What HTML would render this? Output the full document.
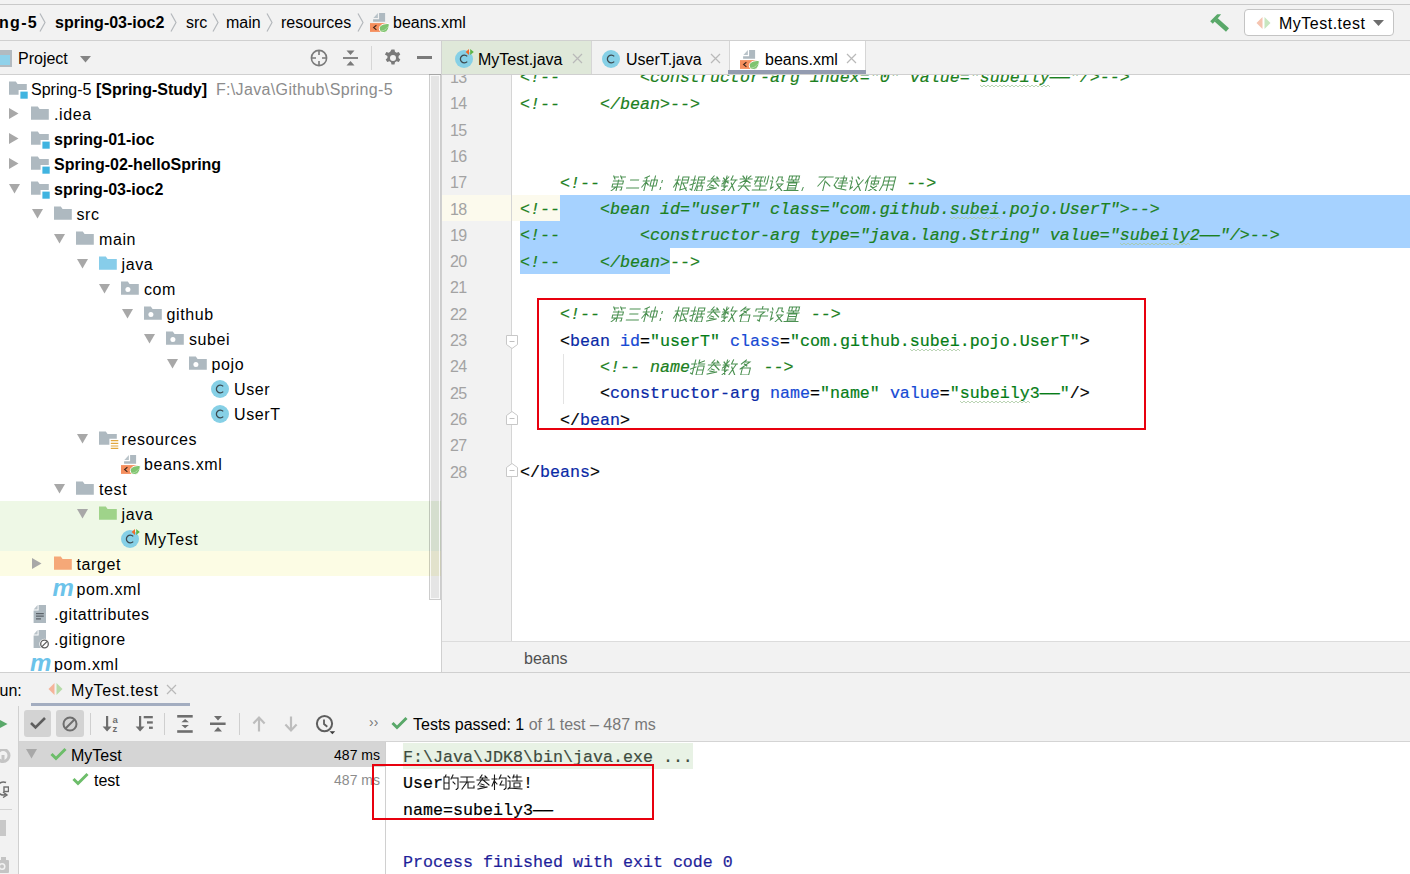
<!DOCTYPE html><html><head><meta charset="utf-8"><style>
*{margin:0;padding:0;box-sizing:border-box}
html,body{width:1410px;height:874px;overflow:hidden;background:#f2f2f2}
body{position:relative;font-family:"Liberation Sans",sans-serif;font-size:16px;color:#000}
.a{position:absolute}
.t{position:absolute;white-space:pre;line-height:25px;height:25px}
.b{font-weight:bold}
.mono{font-family:"Liberation Mono",monospace;font-size:16.67px;white-space:pre;-webkit-text-stroke:0.2px currentColor}
.cm{color:#1b8020;font-style:italic}
.tg{color:#0a2aa6}
.at{color:#174ad4}
.vl{color:#067d17}
.bk{color:#000}
.cjk{display:inline-block;overflow:hidden;vertical-align:top;letter-spacing:5.9px;color:#6a9a6c}
</style></head><body>
<div class="a" style="left:0px;top:4px;width:1410px;height:1px;background:#c9c9c9;"></div>
<div class="a" style="left:0px;top:40px;width:1410px;height:1px;background:#d0d0d0;"></div>
<div class="t b" style="left:-100px;top:10px;width:138px;text-align:right;letter-spacing:1.3px">ng-5</div>
<svg class="a" style="left:39px;top:13px" width="8" height="20" viewBox="0 0 8 20"><path d="M1 0.5 L6 9.5 L1 18.5" fill="none" stroke="#b4b8bc" stroke-width="1.2"/></svg>
<div class="t b" style="left:55px;top:10px;">spring-03-ioc2</div>
<svg class="a" style="left:170px;top:13px" width="8" height="20" viewBox="0 0 8 20"><path d="M1 0.5 L6 9.5 L1 18.5" fill="none" stroke="#b4b8bc" stroke-width="1.2"/></svg>
<div class="t " style="left:186px;top:10px;">src</div>
<svg class="a" style="left:212px;top:13px" width="8" height="20" viewBox="0 0 8 20"><path d="M1 0.5 L6 9.5 L1 18.5" fill="none" stroke="#b4b8bc" stroke-width="1.2"/></svg>
<div class="t " style="left:226px;top:10px;">main</div>
<svg class="a" style="left:266px;top:13px" width="8" height="20" viewBox="0 0 8 20"><path d="M1 0.5 L6 9.5 L1 18.5" fill="none" stroke="#b4b8bc" stroke-width="1.2"/></svg>
<div class="t " style="left:281px;top:10px;">resources</div>
<svg class="a" style="left:357px;top:13px" width="8" height="20" viewBox="0 0 8 20"><path d="M1 0.5 L6 9.5 L1 18.5" fill="none" stroke="#b4b8bc" stroke-width="1.2"/></svg>
<svg class="a" style="left:370px;top:13px" width="20" height="20" viewBox="0 0 20 20"><path d="M3.4 5 L7.9 0 V5 Z" fill="#b9c3c9"/><path d="M9.1 0 H15.1 V8.8 H3.1 V6.2 H9.1 Z" fill="#aeb9c0"/><rect x="0" y="10.1" width="16.9" height="8.8" fill="#f58e5d"/><path d="M6.4 12.3 L3.6 14.5 L6.4 16.8" fill="none" stroke="#40261a" stroke-width="1.1"/><path d="M9.3 15.6 C9.3 12.3 12.8 10.6 19.2 10.4 C19.4 16.2 17 19.6 13 19.5 C10.9 19.4 9.3 17.8 9.3 15.6 Z" fill="#7fc46f" stroke="#fff" stroke-width="1"/><path d="M11.5 18 Q15.5 17.5 18 13.5" fill="none" stroke="#e8f5e3" stroke-width="0.7" stroke-dasharray="1.2 0.8"/></svg>
<div class="t " style="left:393px;top:10px;">beans.xml</div>
<svg class="a" style="left:1208px;top:12px" width="24" height="22" viewBox="0 0 24 22"><path d="M2.2 9.3 L9.2 2.3 H13.1 L11.1 4.8 L4.8 11.8 Z" fill="#59a869"/><path d="M8 7.7 L19.5 18" stroke="#59a869" stroke-width="4.5"/></svg>
<div class="a" style="left:1244px;top:9px;width:150px;height:27px;background:#fff;border:1px solid #c4c4c4;border-radius:4px"></div>
<svg class="a" style="left:1256px;top:16px" width="16" height="14" viewBox="0 0 16 14"><path d="M6.5 1 L0.5 7 L6.5 13 Z" fill="#f5c4b0"/><path d="M8.5 1 L14.5 7 L8.5 13 Z" fill="#c8e6c0"/></svg>
<div class="t " style="left:1279px;top:11px;letter-spacing:0.5px">MyTest.test</div>
<svg class="a" style="left:1373px;top:19px" width="12" height="8" viewBox="0 0 12 8"><path d="M0 1 L11 1 L5.5 7 Z" fill="#6e6e6e"/></svg>
<div class="a" style="left:0px;top:74px;width:441px;height:1px;background:#d0d0d0;"></div>
<div class="a" style="left:-2px;top:50px;width:14px;height:17px;background:#8fd1ea;border:2.5px solid #b2bac0;border-top-width:5px"></div>
<div class="t " style="left:18px;top:46px;">Project</div>
<svg class="a" style="left:80px;top:56px" width="12" height="8" viewBox="0 0 12 8"><path d="M0 0 L11 0 L5.5 6.5 Z" fill="#858585"/></svg>
<svg class="a" style="left:309px;top:49px" width="20" height="18" viewBox="0 0 20 18"><circle cx="10" cy="9" r="7.6" fill="none" stroke="#7a7a7a" stroke-width="1.6"/><path d="M10 1 V6 M10 12 V17 M2 9 H7 M13 9 H18" stroke="#7a7a7a" stroke-width="1.6"/></svg>
<svg class="a" style="left:343px;top:49px" width="16" height="18" viewBox="0 0 16 18"><path d="M0 9 H15" stroke="#7a7a7a" stroke-width="1.8"/><path d="M3.5 1.5 H11.5 L7.5 6 Z M3.5 16.5 H11.5 L7.5 12 Z" fill="#7a7a7a"/></svg>
<div class="a" style="left:371px;top:46px;width:1px;height:24px;background:#d6d6d6;"></div>
<svg class="a" style="left:384px;top:49px" width="18" height="18" viewBox="0 0 18 18"><path fill="#7a7a7a" fill-rule="evenodd" d="M7.5 0.5h3l.5 2.3 1.6.9 2.2-.8 1.5 2.6-1.7 1.6v1.8l1.7 1.6-1.5 2.6-2.2-.8-1.6.9-.5 2.3h-3l-.5-2.3-1.6-.9-2.2.8-1.5-2.6 1.7-1.6V7.1L.9 5.5 2.4 2.9l2.2.8 1.6-.9zM9 6a3 3 0 1 0 0 6 3 3 0 0 0 0-6z"/></svg>
<div class="a" style="left:417px;top:56px;width:15px;height:3px;background:#7a7a7a;"></div>
<div class="a" style="left:0px;top:75px;width:441px;height:597px;background:#fff;"></div>
<div class="a" style="left:0px;top:500.5px;width:441px;height:50px;background:#eef8e6;"></div>
<div class="a" style="left:0px;top:550.5px;width:441px;height:25px;background:#fcfce4;"></div>
<div class="a" style="left:441px;top:41px;width:1px;height:631px;background:#d0d0d0;"></div>
<div class="a" style="left:0;top:75px;width:429px;height:597px;overflow:hidden">
<svg class="a" style="left:9px;top:6px" width="21" height="20" viewBox="0 0 21 20"><path d="M0 0.6 H6.8 L8.6 3.1 H17.8 V8.9 H9.6 V13.7 H0 Z" fill="#aeb9c0"/><rect x="11.4" y="10.6" width="7.3" height="7.1" fill="#40b4e0"/></svg>
<div class="t " style="left:31px;top:2px;">Spring-5 <b>[Spring-Study]</b>  <span style="color:#8c8c8c;letter-spacing:0.35px">F:\Java\Github\Spring-5</span></div>
<svg class="a" style="left:9.0px;top:33px" width="10" height="11" viewBox="0 0 10 11"><path d="M0 0 L9.5 5.5 L0 11 Z" fill="#a8a8a8"/></svg>
<svg class="a" style="left:31.0px;top:31px" width="21" height="20" viewBox="0 0 21 20"><path d="M0 0.6 H6.8 L8.6 3.1 H17.8 V13.7 H0 Z" fill="#aeb9c0"/></svg>
<div class="t " style="left:54.0px;top:27px;letter-spacing:0.6px">.idea</div>
<svg class="a" style="left:9.0px;top:58px" width="10" height="11" viewBox="0 0 10 11"><path d="M0 0 L9.5 5.5 L0 11 Z" fill="#a8a8a8"/></svg>
<svg class="a" style="left:31.0px;top:56px" width="21" height="20" viewBox="0 0 21 20"><path d="M0 0.6 H6.8 L8.6 3.1 H17.8 V8.9 H9.6 V13.7 H0 Z" fill="#aeb9c0"/><rect x="11.4" y="10.6" width="7.3" height="7.1" fill="#40b4e0"/></svg>
<div class="t b" style="left:54.0px;top:52px;">spring-01-ioc</div>
<svg class="a" style="left:9.0px;top:83px" width="10" height="11" viewBox="0 0 10 11"><path d="M0 0 L9.5 5.5 L0 11 Z" fill="#a8a8a8"/></svg>
<svg class="a" style="left:31.0px;top:81px" width="21" height="20" viewBox="0 0 21 20"><path d="M0 0.6 H6.8 L8.6 3.1 H17.8 V8.9 H9.6 V13.7 H0 Z" fill="#aeb9c0"/><rect x="11.4" y="10.6" width="7.3" height="7.1" fill="#40b4e0"/></svg>
<div class="t b" style="left:54.0px;top:77px;">Spring-02-helloSpring</div>
<svg class="a" style="left:9.0px;top:109px" width="11" height="10" viewBox="0 0 11 10"><path d="M0 0 L11 0 L5.5 9.5 Z" fill="#a8a8a8"/></svg>
<svg class="a" style="left:31.0px;top:106px" width="21" height="20" viewBox="0 0 21 20"><path d="M0 0.6 H6.8 L8.6 3.1 H17.8 V8.9 H9.6 V13.7 H0 Z" fill="#aeb9c0"/><rect x="11.4" y="10.6" width="7.3" height="7.1" fill="#40b4e0"/></svg>
<div class="t b" style="left:54.0px;top:102px;">spring-03-ioc2</div>
<svg class="a" style="left:31.5px;top:134px" width="11" height="10" viewBox="0 0 11 10"><path d="M0 0 L11 0 L5.5 9.5 Z" fill="#a8a8a8"/></svg>
<svg class="a" style="left:53.5px;top:131px" width="21" height="20" viewBox="0 0 21 20"><path d="M0 0.6 H6.8 L8.6 3.1 H17.8 V13.7 H0 Z" fill="#aeb9c0"/></svg>
<div class="t " style="left:76.5px;top:127px;letter-spacing:0.6px">src</div>
<svg class="a" style="left:54.0px;top:159px" width="11" height="10" viewBox="0 0 11 10"><path d="M0 0 L11 0 L5.5 9.5 Z" fill="#a8a8a8"/></svg>
<svg class="a" style="left:76.0px;top:156px" width="21" height="20" viewBox="0 0 21 20"><path d="M0 0.6 H6.8 L8.6 3.1 H17.8 V13.7 H0 Z" fill="#aeb9c0"/></svg>
<div class="t " style="left:99.0px;top:152px;letter-spacing:0.6px">main</div>
<svg class="a" style="left:76.5px;top:184px" width="11" height="10" viewBox="0 0 11 10"><path d="M0 0 L11 0 L5.5 9.5 Z" fill="#a8a8a8"/></svg>
<svg class="a" style="left:98.5px;top:181px" width="21" height="20" viewBox="0 0 21 20"><path d="M0 0.6 H6.8 L8.6 3.1 H17.8 V13.7 H0 Z" fill="#87cdea"/></svg>
<div class="t " style="left:121.5px;top:177px;letter-spacing:0.6px">java</div>
<svg class="a" style="left:99.0px;top:209px" width="11" height="10" viewBox="0 0 11 10"><path d="M0 0 L11 0 L5.5 9.5 Z" fill="#a8a8a8"/></svg>
<svg class="a" style="left:121.0px;top:206px" width="21" height="20" viewBox="0 0 21 20"><path d="M0 0.6 H6.8 L8.6 3.1 H17.8 V13.7 H0 Z" fill="#aeb9c0"/><circle cx="6.9" cy="8.6" r="2.5" fill="#fff"/></svg>
<div class="t " style="left:144.0px;top:202px;letter-spacing:0.6px">com</div>
<svg class="a" style="left:121.5px;top:234px" width="11" height="10" viewBox="0 0 11 10"><path d="M0 0 L11 0 L5.5 9.5 Z" fill="#a8a8a8"/></svg>
<svg class="a" style="left:143.5px;top:231px" width="21" height="20" viewBox="0 0 21 20"><path d="M0 0.6 H6.8 L8.6 3.1 H17.8 V13.7 H0 Z" fill="#aeb9c0"/><circle cx="6.9" cy="8.6" r="2.5" fill="#fff"/></svg>
<div class="t " style="left:166.5px;top:227px;letter-spacing:0.6px">github</div>
<svg class="a" style="left:144.0px;top:259px" width="11" height="10" viewBox="0 0 11 10"><path d="M0 0 L11 0 L5.5 9.5 Z" fill="#a8a8a8"/></svg>
<svg class="a" style="left:166.0px;top:256px" width="21" height="20" viewBox="0 0 21 20"><path d="M0 0.6 H6.8 L8.6 3.1 H17.8 V13.7 H0 Z" fill="#aeb9c0"/><circle cx="6.9" cy="8.6" r="2.5" fill="#fff"/></svg>
<div class="t " style="left:189.0px;top:252px;letter-spacing:0.6px">subei</div>
<svg class="a" style="left:166.5px;top:284px" width="11" height="10" viewBox="0 0 11 10"><path d="M0 0 L11 0 L5.5 9.5 Z" fill="#a8a8a8"/></svg>
<svg class="a" style="left:188.5px;top:281px" width="21" height="20" viewBox="0 0 21 20"><path d="M0 0.6 H6.8 L8.6 3.1 H17.8 V13.7 H0 Z" fill="#aeb9c0"/><circle cx="6.9" cy="8.6" r="2.5" fill="#fff"/></svg>
<div class="t " style="left:211.5px;top:277px;letter-spacing:0.6px">pojo</div>
<svg class="a" style="left:210.0px;top:303px" width="21" height="21" viewBox="0 0 21 21"><circle cx="10" cy="11" r="9" fill="#86d0e6"/><path d="M13.2 8.4 A3.9 3.9 0 1 0 13.2 13.6" fill="none" stroke="#3d4a50" stroke-width="1.3"/></svg>
<div class="t " style="left:234.0px;top:302px;letter-spacing:0.6px">User</div>
<svg class="a" style="left:210.0px;top:328px" width="21" height="21" viewBox="0 0 21 21"><circle cx="10" cy="11" r="9" fill="#86d0e6"/><path d="M13.2 8.4 A3.9 3.9 0 1 0 13.2 13.6" fill="none" stroke="#3d4a50" stroke-width="1.3"/></svg>
<div class="t " style="left:234.0px;top:327px;letter-spacing:0.6px">UserT</div>
<svg class="a" style="left:76.5px;top:359px" width="11" height="10" viewBox="0 0 11 10"><path d="M0 0 L11 0 L5.5 9.5 Z" fill="#a8a8a8"/></svg>
<svg class="a" style="left:98.5px;top:356px" width="21" height="20" viewBox="0 0 21 20"><path d="M0 0.6 H6.8 L8.6 3.1 H17.8 V7.7 H10.4 V13.7 H0 Z" fill="#aeb9c0"/><path d="M11.8 9.7 H19.3 M11.8 12.4 H19.3 M11.8 15 H19.3 M11.8 17.4 H19.3" stroke="#e2a73c" stroke-width="1.2"/></svg>
<div class="t " style="left:121.5px;top:352px;letter-spacing:0.6px">resources</div>
<svg class="a" style="left:121.0px;top:380px" width="20" height="20" viewBox="0 0 20 20"><path d="M3.4 5 L7.9 0 V5 Z" fill="#b9c3c9"/><path d="M9.1 0 H15.1 V8.8 H3.1 V6.2 H9.1 Z" fill="#aeb9c0"/><rect x="0" y="10.1" width="16.9" height="8.8" fill="#f58e5d"/><path d="M6.4 12.3 L3.6 14.5 L6.4 16.8" fill="none" stroke="#40261a" stroke-width="1.1"/><path d="M9.3 15.6 C9.3 12.3 12.8 10.6 19.2 10.4 C19.4 16.2 17 19.6 13 19.5 C10.9 19.4 9.3 17.8 9.3 15.6 Z" fill="#7fc46f" stroke="#fff" stroke-width="1"/><path d="M11.5 18 Q15.5 17.5 18 13.5" fill="none" stroke="#e8f5e3" stroke-width="0.7" stroke-dasharray="1.2 0.8"/></svg>
<div class="t " style="left:144.0px;top:377px;letter-spacing:0.6px">beans.xml</div>
<svg class="a" style="left:54.0px;top:409px" width="11" height="10" viewBox="0 0 11 10"><path d="M0 0 L11 0 L5.5 9.5 Z" fill="#a8a8a8"/></svg>
<svg class="a" style="left:76.0px;top:406px" width="21" height="20" viewBox="0 0 21 20"><path d="M0 0.6 H6.8 L8.6 3.1 H17.8 V13.7 H0 Z" fill="#aeb9c0"/></svg>
<div class="t " style="left:99.0px;top:402px;letter-spacing:0.6px">test</div>
<svg class="a" style="left:76.5px;top:434px" width="11" height="10" viewBox="0 0 11 10"><path d="M0 0 L11 0 L5.5 9.5 Z" fill="#a8a8a8"/></svg>
<svg class="a" style="left:98.5px;top:431px" width="21" height="20" viewBox="0 0 21 20"><path d="M0 0.6 H6.8 L8.6 3.1 H17.8 V13.7 H0 Z" fill="#9fd38a"/></svg>
<div class="t " style="left:121.5px;top:427px;letter-spacing:0.6px">java</div>
<svg class="a" style="left:120.0px;top:453px" width="21" height="21" viewBox="0 0 21 21"><circle cx="10" cy="11" r="9" fill="#86d0e6"/><path d="M13.2 8.4 A3.9 3.9 0 1 0 13.2 13.6" fill="none" stroke="#3d4a50" stroke-width="1.3"/><path d="M15 1 L11.6 4 L15 7 Z" fill="#ee6a2a"/><path d="M16.2 1 L19.8 4 L16.2 7 Z" fill="#5db546"/></svg>
<div class="t " style="left:144.0px;top:452px;letter-spacing:0.6px">MyTest</div>
<svg class="a" style="left:31.5px;top:483px" width="10" height="11" viewBox="0 0 10 11"><path d="M0 0 L9.5 5.5 L0 11 Z" fill="#a8a8a8"/></svg>
<svg class="a" style="left:53.5px;top:481px" width="21" height="20" viewBox="0 0 21 20"><path d="M0 0.6 H6.8 L8.6 3.1 H17.8 V13.7 H0 Z" fill="#f5a878"/></svg>
<div class="t " style="left:76.5px;top:477px;letter-spacing:0.6px">target</div>
<div class="a" style="left:52.5px;top:503px;font-family:'Liberation Sans';font-weight:bold;font-style:italic;font-size:24px;line-height:20px;color:#6cc3ea;letter-spacing:-1px">m</div>
<div class="t " style="left:76.5px;top:502px;letter-spacing:0.6px">pom.xml</div>
<svg class="a" style="left:33.0px;top:530px" width="17" height="20" viewBox="0 0 17 20"><path d="M5.6 0 H13 V18 H0.6 V5.5 H5.6 Z" fill="#aeb9c0"/><path d="M0.6 4.5 L4.6 0 V4.5 Z" fill="#b9c3c9"/><path d="M3 8.6 H10.8 M3 11.1 H10.8 M3 13.9 H8" stroke="#5c6369" stroke-width="1.2"/></svg>
<div class="t " style="left:54.0px;top:527px;letter-spacing:0.6px">.gitattributes</div>
<svg class="a" style="left:33.0px;top:555px" width="17" height="20" viewBox="0 0 17 20"><path d="M5.6 0 H13 V18 H0.6 V5.5 H5.6 Z" fill="#aeb9c0"/><path d="M0.6 4.5 L4.6 0 V4.5 Z" fill="#b9c3c9"/><circle cx="11.5" cy="14" r="5.2" fill="#fff"/><circle cx="11.5" cy="14" r="3.8" fill="none" stroke="#5e5e5e" stroke-width="1.3"/><path d="M9 16.6 L14.1 11.4" stroke="#5e5e5e" stroke-width="1.3"/></svg>
<div class="t " style="left:54.0px;top:552px;letter-spacing:0.6px">.gitignore</div>
<div class="a" style="left:30.0px;top:578px;font-family:'Liberation Sans';font-weight:bold;font-style:italic;font-size:24px;line-height:20px;color:#6cc3ea;letter-spacing:-1px">m</div>
<div class="t " style="left:54.0px;top:577px;letter-spacing:0.6px">pom.xml</div>
</div>
<div class="a" style="left:429px;top:74px;width:12px;height:526px;background:rgba(0,0,0,0.1);border:1px solid rgba(0,0,0,0.1);box-shadow:inset 0 0 0 1px rgba(255,255,255,0.75)"></div>
<div class="a" style="left:442px;top:41px;width:149px;height:33px;background:#dfe8d9;"></div>
<div class="a" style="left:591px;top:41px;width:1px;height:33px;background:#d6d6d6;"></div>
<div class="a" style="left:730px;top:41px;width:135px;height:33px;background:#ffffff;"></div>
<div class="a" style="left:729px;top:41px;width:1px;height:33px;background:#d6d6d6;"></div>
<div class="a" style="left:865px;top:41px;width:1px;height:33px;background:#d6d6d6;"></div>
<div class="a" style="left:728px;top:70px;width:138px;height:4px;background:#939bb0;"></div>
<div class="a" style="left:442px;top:74px;width:968px;height:1px;background:#d0d0d0;"></div>
<svg class="a" style="left:454px;top:48px" width="21" height="21" viewBox="0 0 21 21"><circle cx="10" cy="11" r="9" fill="#86d0e6"/><path d="M13.2 8.4 A3.9 3.9 0 1 0 13.2 13.6" fill="none" stroke="#3d4a50" stroke-width="1.3"/><path d="M15 1 L11.6 4 L15 7 Z" fill="#ee6a2a"/><path d="M16.2 1 L19.8 4 L16.2 7 Z" fill="#5db546"/></svg>
<div class="t " style="left:478px;top:47px;">MyTest.java</div>
<svg class="a" style="left:572px;top:53px" width="11" height="11" viewBox="0 0 11 11"><path d="M1 1 L10 10 M10 1 L1 10" stroke="#b9b9b9" stroke-width="1.2"/></svg>
<svg class="a" style="left:601px;top:48px" width="21" height="21" viewBox="0 0 21 21"><circle cx="10" cy="11" r="9" fill="#86d0e6"/><path d="M13.2 8.4 A3.9 3.9 0 1 0 13.2 13.6" fill="none" stroke="#3d4a50" stroke-width="1.3"/></svg>
<div class="t " style="left:626px;top:47px;">UserT.java</div>
<svg class="a" style="left:710px;top:53px" width="11" height="11" viewBox="0 0 11 11"><path d="M1 1 L10 10 M10 1 L1 10" stroke="#b9b9b9" stroke-width="1.2"/></svg>
<svg class="a" style="left:740px;top:50px" width="20" height="20" viewBox="0 0 20 20"><path d="M3.4 5 L7.9 0 V5 Z" fill="#b9c3c9"/><path d="M9.1 0 H15.1 V8.8 H3.1 V6.2 H9.1 Z" fill="#aeb9c0"/><rect x="0" y="10.1" width="16.9" height="8.8" fill="#f58e5d"/><path d="M6.4 12.3 L3.6 14.5 L6.4 16.8" fill="none" stroke="#40261a" stroke-width="1.1"/><path d="M9.3 15.6 C9.3 12.3 12.8 10.6 19.2 10.4 C19.4 16.2 17 19.6 13 19.5 C10.9 19.4 9.3 17.8 9.3 15.6 Z" fill="#7fc46f" stroke="#fff" stroke-width="1"/><path d="M11.5 18 Q15.5 17.5 18 13.5" fill="none" stroke="#e8f5e3" stroke-width="0.7" stroke-dasharray="1.2 0.8"/></svg>
<div class="t " style="left:765px;top:47px;">beans.xml</div>
<svg class="a" style="left:846px;top:53px" width="11" height="11" viewBox="0 0 11 11"><path d="M1 1 L10 10 M10 1 L1 10" stroke="#b9b9b9" stroke-width="1.2"/></svg>
<div class="a" style="left:442px;top:75px;width:968px;height:566px;background:#fff;overflow:hidden">
<div class="a" style="left:0;top:0;width:69px;height:566px;background:#f2f2f2"></div>
<div class="a" style="left:69px;top:0;width:1px;height:566px;background:#d5d5d5"></div>
<div class="a" style="left:0;top:120.0px;width:69px;height:26.333px;background:#fcfaed"></div>
<div class="a" style="left:70px;top:120.0px;width:48px;height:26.333px;background:#fcfaed"></div>
<div class="a" style="left:118px;top:120.0px;width:850px;height:26.333px;background:#a6d2ff"></div>
<div class="a" style="left:78px;top:146.333px;width:890px;height:26.833px;background:#a6d2ff"></div>
<div class="a" style="left:78px;top:172.666px;width:150px;height:26.333px;background:#a6d2ff"></div>
<div class="a" style="left:8px;top:-10.164999999999992px;line-height:26.333px;font-size:16px;letter-spacing:-0.6px;color:#a3a3a3">13</div>
<div class="a" style="left:8px;top:16.168000000000006px;line-height:26.333px;font-size:16px;letter-spacing:-0.6px;color:#a3a3a3">14</div>
<div class="a" style="left:8px;top:42.501000000000005px;line-height:26.333px;font-size:16px;letter-spacing:-0.6px;color:#a3a3a3">15</div>
<div class="a" style="left:8px;top:68.834px;line-height:26.333px;font-size:16px;letter-spacing:-0.6px;color:#a3a3a3">16</div>
<div class="a" style="left:8px;top:95.167px;line-height:26.333px;font-size:16px;letter-spacing:-0.6px;color:#a3a3a3">17</div>
<div class="a" style="left:8px;top:121.5px;line-height:26.333px;font-size:16px;letter-spacing:-0.6px;color:#a3a3a3">18</div>
<div class="a" style="left:8px;top:147.833px;line-height:26.333px;font-size:16px;letter-spacing:-0.6px;color:#a3a3a3">19</div>
<div class="a" style="left:8px;top:174.166px;line-height:26.333px;font-size:16px;letter-spacing:-0.6px;color:#a3a3a3">20</div>
<div class="a" style="left:8px;top:200.499px;line-height:26.333px;font-size:16px;letter-spacing:-0.6px;color:#a3a3a3">21</div>
<div class="a" style="left:8px;top:226.832px;line-height:26.333px;font-size:16px;letter-spacing:-0.6px;color:#a3a3a3">22</div>
<div class="a" style="left:8px;top:253.165px;line-height:26.333px;font-size:16px;letter-spacing:-0.6px;color:#a3a3a3">23</div>
<div class="a" style="left:8px;top:279.49800000000005px;line-height:26.333px;font-size:16px;letter-spacing:-0.6px;color:#a3a3a3">24</div>
<div class="a" style="left:8px;top:305.831px;line-height:26.333px;font-size:16px;letter-spacing:-0.6px;color:#a3a3a3">25</div>
<div class="a" style="left:8px;top:332.164px;line-height:26.333px;font-size:16px;letter-spacing:-0.6px;color:#a3a3a3">26</div>
<div class="a" style="left:8px;top:358.49699999999996px;line-height:26.333px;font-size:16px;letter-spacing:-0.6px;color:#a3a3a3">27</div>
<div class="a" style="left:8px;top:384.83000000000004px;line-height:26.333px;font-size:16px;letter-spacing:-0.6px;color:#a3a3a3">28</div>
<div class="a" style="left:121px;top:278.99800000000005px;width:1px;height:49.666px;background:#e3e3e3"></div>
<svg class="a" style="left:64px;top:260px" width="12" height="14" viewBox="0 0 12 14"><path d="M0.5 0.5 H11.5 V9.5 L6 13.5 L0.5 9.5 Z" fill="#fff" stroke="#c8c8c8" stroke-width="1"/><path d="M3.5 6.5 H8.5" stroke="#c0c0c0" stroke-width="1"/></svg>
<svg class="a" style="left:64px;top:336px" width="12" height="14" viewBox="0 0 12 14"><path d="M0.5 13.5 V4.5 L6 0.5 L11.5 4.5 V13.5 Z" fill="#fff" stroke="#c8c8c8" stroke-width="1"/><path d="M3.5 7.5 H8.5" stroke="#c0c0c0" stroke-width="1"/></svg>
<svg class="a" style="left:64px;top:388px" width="12" height="14" viewBox="0 0 12 14"><path d="M0.5 13.5 V4.5 L6 0.5 L11.5 4.5 V13.5 Z" fill="#fff" stroke="#c8c8c8" stroke-width="1"/><path d="M3.5 7.5 H8.5" stroke="#c0c0c0" stroke-width="1"/></svg>
<svg class="a" style="left:538px;top:9.335000000000008px" width="71" height="4" viewBox="0 -0.5 71 3"><polyline points="0.0,0 2.0,2 4.0,0 6.0,2 8.0,0 10.0,2 12.0,0 14.0,2 16.0,0 18.0,2 20.0,0 22.0,2 24.0,0 26.0,2 28.0,0 30.0,2 32.0,0 34.0,2 36.0,0 38.0,2 40.0,0 42.0,2 44.0,0 46.0,2 48.0,0 50.0,2 52.0,0 54.0,2 56.0,0 58.0,2 60.0,0 62.0,2 64.0,0 66.0,2 68.0,0 70.0,2" fill="none" stroke="#a9c9a2" stroke-width="0.8"/></svg>
<svg class="a" style="left:508px;top:141.0px" width="51" height="4" viewBox="0 -0.5 51 3"><polyline points="0.0,0 2.0,2 4.0,0 6.0,2 8.0,0 10.0,2 12.0,0 14.0,2 16.0,0 18.0,2 20.0,0 22.0,2 24.0,0 26.0,2 28.0,0 30.0,2 32.0,0 34.0,2 36.0,0 38.0,2 40.0,0 42.0,2 44.0,0 46.0,2 48.0,0 50.0,2" fill="none" stroke="#a9c9a2" stroke-width="0.8"/></svg>
<svg class="a" style="left:678px;top:167.333px" width="71" height="4" viewBox="0 -0.5 71 3"><polyline points="0.0,0 2.0,2 4.0,0 6.0,2 8.0,0 10.0,2 12.0,0 14.0,2 16.0,0 18.0,2 20.0,0 22.0,2 24.0,0 26.0,2 28.0,0 30.0,2 32.0,0 34.0,2 36.0,0 38.0,2 40.0,0 42.0,2 44.0,0 46.0,2 48.0,0 50.0,2 52.0,0 54.0,2 56.0,0 58.0,2 60.0,0 62.0,2 64.0,0 66.0,2 68.0,0 70.0,2" fill="none" stroke="#a9c9a2" stroke-width="0.8"/></svg>
<svg class="a" style="left:468px;top:272.66499999999996px" width="51" height="4" viewBox="0 -0.5 51 3"><polyline points="0.0,0 2.0,2 4.0,0 6.0,2 8.0,0 10.0,2 12.0,0 14.0,2 16.0,0 18.0,2 20.0,0 22.0,2 24.0,0 26.0,2 28.0,0 30.0,2 32.0,0 34.0,2 36.0,0 38.0,2 40.0,0 42.0,2 44.0,0 46.0,2 48.0,0 50.0,2" fill="none" stroke="#a9c9a2" stroke-width="0.8"/></svg>
<svg class="a" style="left:518px;top:325.331px" width="71" height="4" viewBox="0 -0.5 71 3"><polyline points="0.0,0 2.0,2 4.0,0 6.0,2 8.0,0 10.0,2 12.0,0 14.0,2 16.0,0 18.0,2 20.0,0 22.0,2 24.0,0 26.0,2 28.0,0 30.0,2 32.0,0 34.0,2 36.0,0 38.0,2 40.0,0 42.0,2 44.0,0 46.0,2 48.0,0 50.0,2 52.0,0 54.0,2 56.0,0 58.0,2 60.0,0 62.0,2 64.0,0 66.0,2 68.0,0 70.0,2" fill="none" stroke="#a9c9a2" stroke-width="0.8"/></svg>
<div class="a mono" style="left:78px;top:-9.664999999999992px;line-height:26.333px"><span class="cm">&lt;!--        &lt;constructor-arg index="0" value="subeily——"/&gt;--&gt;</span></div>
<div class="a mono" style="left:78px;top:16.668000000000006px;line-height:26.333px"><span class="cm">&lt;!--    &lt;/bean&gt;--&gt;</span></div>
<div class="a mono" style="left:78px;top:95.667px;line-height:26.333px"><span class="cm">    &lt;!-- </span><span class="cm"><svg style="display:inline-block;vertical-align:top;position:relative;top:4px;transform:skewX(-14deg);" width="286.2" height="16" viewBox="0 0 288 16" preserveAspectRatio="none"><g fill="none" stroke="#4c9152" stroke-width="1.1" stroke-linecap="square"><path transform="translate(0,0)" d="M2 1L4 4M3 2H7M9 1L11 4M10 2H14M3 6H13V9H3V12H13V15L12 15M8 5V16M7 12L3 16"/><path transform="translate(16,0)" d="M4 5H12M2 13H14"/><path transform="translate(32,0)" d="M6 1L2 3M1 6H7M4 3V16M4 7L1 12M4 7L7 10M9 5H15V11H9ZM12 1V16"/><path transform="translate(48,0)" d="M4 5.5V7.5M4 12.5V14.5"/><path transform="translate(64,0)" d="M1 5H6M3.5 1V16M3.5 6L1 12M3.5 7L6 10M8 2H14V8H8ZM8 5H14M8 2V15L14 13M10 9L15 16"/><path transform="translate(80,0)" d="M1 5H6M4 1V15L2 14M1 10L6 8M8 2H14V5H8M8 2V10L7 16M9 8H15M12 6V11M9 11H14V16H9Z"/><path transform="translate(96,0)" d="M7 1L5 4H12L10 2M2 6H14M8 4L3 11M8 6L14 11M6 10L9 11M5 12L10 13M3 15L12 13"/><path transform="translate(112,0)" d="M1 3L3 5M6 2L4 5M1 6H7M4 1V9M4 6L1 9M4 6L7 8M1 11H7M3 9L5 16M6 11L2 16M10 1L9 5H15M14 5L9 16M10 8L15 16"/><path transform="translate(128,0)" d="M4 1L6 3M12 1L10 3M2 4H14M8 1V8M8 5L3 8M8 5L13 8M2 11H14M8 8L3 16M8 11L14 16"/><path transform="translate(144,0)" d="M1 2H9M1 6H9M4 2L2 9M7 2V9M11 2V7M14 1V9L13 9M3 11H13M8 9V15M1 15H15"/><path transform="translate(160,0)" d="M2 2L3 4M1 6H3V14L5 12M8 2V5L7 7M8 2H12V5L14 6M8 9H14L8 16M9 10L15 16"/><path transform="translate(176,0)" d="M3 1H13V5H3ZM6 1V5M10 1V5M2 7H14M8 5V8M4 8H12V15H4ZM4 10.5H12M4 13H12M1 15.5H15"/><path transform="translate(192,0)" d="M3.5 12.5L3 16"/><path transform="translate(208,0)" d="M1 2H15M8 2L2 11M8 6V16M9 7L14 11"/><path transform="translate(224,0)" d="M2 3H5L2 10L5 13L15 15M7 3H13V6H7M6 8H15M7 11H14M10 1V14"/><path transform="translate(240,0)" d="M2 2L3 4M1 6H3V14L5 12M8 2L10 4M7 5L14 16M14 5L7 16"/><path transform="translate(256,0)" d="M4 1L1 8M3 5V16M6 3H15M10 1V10M7 6H14V9H7ZM7 11L14 16M13 11L6 16"/><path transform="translate(272,0)" d="M3 2H14V15L12 14M3 2V10L1 16M3 6H14M3 10H14M8 2V16"/></g></svg></span><span class="cm"> --&gt;</span></div>
<div class="a mono" style="left:78px;top:122.0px;line-height:26.333px"><span class="cm">&lt;!--    &lt;bean id="userT" class="com.github.subei.pojo.UserT"&gt;--&gt;</span></div>
<div class="a mono" style="left:78px;top:148.333px;line-height:26.333px"><span class="cm">&lt;!--        &lt;constructor-arg type="java.lang.String" value="subeily2——"/&gt;--&gt;</span></div>
<div class="a mono" style="left:78px;top:174.666px;line-height:26.333px"><span class="cm">&lt;!--    &lt;/bean&gt;--&gt;</span></div>
<div class="a mono" style="left:78px;top:227.332px;line-height:26.333px"><span class="cm">    &lt;!-- </span><span class="cm"><svg style="display:inline-block;vertical-align:top;position:relative;top:4px;transform:skewX(-14deg);" width="190.8" height="16" viewBox="0 0 192 16" preserveAspectRatio="none"><g fill="none" stroke="#4c9152" stroke-width="1.1" stroke-linecap="square"><path transform="translate(0,0)" d="M2 1L4 4M3 2H7M9 1L11 4M10 2H14M3 6H13V9H3V12H13V15L12 15M8 5V16M7 12L3 16"/><path transform="translate(16,0)" d="M3 3H13M4 8H12M2 14H14"/><path transform="translate(32,0)" d="M6 1L2 3M1 6H7M4 3V16M4 7L1 12M4 7L7 10M9 5H15V11H9ZM12 1V16"/><path transform="translate(48,0)" d="M4 5.5V7.5M4 12.5V14.5"/><path transform="translate(64,0)" d="M1 5H6M3.5 1V16M3.5 6L1 12M3.5 7L6 10M8 2H14V8H8ZM8 5H14M8 2V15L14 13M10 9L15 16"/><path transform="translate(80,0)" d="M1 5H6M4 1V15L2 14M1 10L6 8M8 2H14V5H8M8 2V10L7 16M9 8H15M12 6V11M9 11H14V16H9Z"/><path transform="translate(96,0)" d="M7 1L5 4H12L10 2M2 6H14M8 4L3 11M8 6L14 11M6 10L9 11M5 12L10 13M3 15L12 13"/><path transform="translate(112,0)" d="M1 3L3 5M6 2L4 5M1 6H7M4 1V9M4 6L1 9M4 6L7 8M1 11H7M3 9L5 16M6 11L2 16M10 1L9 5H15M14 5L9 16M10 8L15 16"/><path transform="translate(128,0)" d="M7 1L3 5M5 3H11L3 10M6 5L9 7M5 9H13V16H5Z"/><path transform="translate(144,0)" d="M8 0V2M2 5V3H14V5M5 6H11L8 9M1 10H15M8 9V15L6 14"/><path transform="translate(160,0)" d="M2 2L3 4M1 6H3V14L5 12M8 2V5L7 7M8 2H12V5L14 6M8 9H14L8 16M9 10L15 16"/><path transform="translate(176,0)" d="M3 1H13V5H3ZM6 1V5M10 1V5M2 7H14M8 5V8M4 8H12V15H4ZM4 10.5H12M4 13H12M1 15.5H15"/></g></svg></span><span class="cm"> --&gt;</span></div>
<div class="a mono" style="left:78px;top:253.665px;line-height:26.333px"><span class="bk">    &lt;</span><span class="tg">bean</span> <span class="at">id</span><span class="bk">=</span><span class="vl">"userT"</span> <span class="at">class</span><span class="bk">=</span><span class="vl">"com.github.subei.pojo.UserT"</span><span class="bk">&gt;</span></div>
<div class="a mono" style="left:78px;top:279.99800000000005px;line-height:26.333px"><span class="cm">        &lt;!-- name</span><span class="cm"><svg style="display:inline-block;vertical-align:top;position:relative;top:4px;transform:skewX(-14deg);" width="63.6" height="16" viewBox="0 0 64 16" preserveAspectRatio="none"><g fill="none" stroke="#4c9152" stroke-width="1.1" stroke-linecap="square"><path transform="translate(0,0)" d="M1 5H6M4 1V15L2 14M1 10L6 8M8 1V5H14M13 2L8 4M8 7H14V16H8ZM8 11H14"/><path transform="translate(16,0)" d="M7 1L5 4H12L10 2M2 6H14M8 4L3 11M8 6L14 11M6 10L9 11M5 12L10 13M3 15L12 13"/><path transform="translate(32,0)" d="M1 3L3 5M6 2L4 5M1 6H7M4 1V9M4 6L1 9M4 6L7 8M1 11H7M3 9L5 16M6 11L2 16M10 1L9 5H15M14 5L9 16M10 8L15 16"/><path transform="translate(48,0)" d="M7 1L3 5M5 3H11L3 10M6 5L9 7M5 9H13V16H5Z"/></g></svg></span><span class="cm"> --&gt;</span></div>
<div class="a mono" style="left:78px;top:306.331px;line-height:26.333px"><span class="bk">        &lt;</span><span class="tg">constructor-arg</span> <span class="at">name</span><span class="bk">=</span><span class="vl">"name"</span> <span class="at">value</span><span class="bk">=</span><span class="vl">"subeily3——"</span><span class="bk">/&gt;</span></div>
<div class="a mono" style="left:78px;top:332.664px;line-height:26.333px"><span class="bk">    &lt;/</span><span class="tg">bean</span><span class="bk">&gt;</span></div>
<div class="a mono" style="left:78px;top:385.33000000000004px;line-height:26.333px"><span class="bk">&lt;/</span><span class="tg">beans</span><span class="bk">&gt;</span></div>
</div>
<div class="a" style="left:537px;top:298px;width:609px;height:132px;border:2px solid #e8000e"></div>
<div class="a" style="left:442px;top:641px;width:968px;height:1px;background:#dcdcdc;"></div>
<div class="t " style="left:524px;top:646px;color:#505050;font-size:16px">beans</div>
<div class="a" style="left:0px;top:672px;width:1410px;height:1px;background:#d0d0d0;"></div>
<div class="t " style="left:-12px;top:678px;">Run:</div>
<svg class="a" style="left:48px;top:682px" width="16" height="14" viewBox="0 0 16 14"><path d="M6.5 1 L0.5 7 L6.5 13 Z" fill="#f5b49a"/><path d="M8.5 1 L14.5 7 L8.5 13 Z" fill="#b5dba8"/></svg>
<div class="t " style="left:71px;top:678px;letter-spacing:0.6px">MyTest.test</div>
<svg class="a" style="left:166px;top:684px" width="11" height="11" viewBox="0 0 11 11"><path d="M1 1 L10 10 M10 1 L1 10" stroke="#b9b9b9" stroke-width="1.2"/></svg>
<div class="a" style="left:31px;top:703px;width:159px;height:3px;background:#a3adc0;"></div>
<div class="a" style="left:0px;top:706px;width:1410px;height:36px;background:#f2f2f2;"></div>
<div class="a" style="left:18px;top:706px;width:1px;height:168px;background:#d0d0d0;"></div>
<svg class="a" style="left:0;top:718px" width="8" height="12" viewBox="0 0 8 12"><path d="M-4 0 L7.5 6 L-4 12 Z" fill="#59a869"/></svg>
<svg class="a" style="left:0;top:749px" width="11" height="16" viewBox="0 0 11 16"><circle cx="3" cy="6.5" r="6" fill="none" stroke="#c4c4c4" stroke-width="3"/><path d="M3 6 V12" stroke="#c4c4c4" stroke-width="3"/></svg>
<svg class="a" style="left:0;top:779px" width="9" height="19" viewBox="0 0 9 19"><path d="M6 3.5 A6.5 6.5 0 1 0 6 15.5" fill="none" stroke="#6e6e6e" stroke-width="1.6"/><rect x="4" y="8" width="4.5" height="4.5" fill="none" stroke="#6e6e6e" stroke-width="1.4"/><path d="M3 13 L7 16 L3 18.5" fill="none" stroke="#6e6e6e" stroke-width="1.4"/></svg>
<div class="a" style="left:0px;top:809px;width:12px;height:1px;background:#d3d3d3;"></div>
<div class="a" style="left:0px;top:820px;width:6px;height:16px;background:#c8c8c8;"></div>
<svg class="a" style="left:0;top:857px" width="10" height="17" viewBox="0 0 10 17"><rect x="-6" y="3" width="15" height="13" rx="1" fill="#c4c4c4"/><rect x="1" y="0" width="5" height="4" fill="#c4c4c4"/><circle cx="2" cy="9.5" r="3.5" fill="#f2f2f2"/><circle cx="2" cy="9.5" r="2" fill="#c4c4c4"/></svg>
<div class="a" style="left:24px;top:710px;width:27px;height:27px;background:#d3d3d3;border-radius:3px"></div>
<div class="a" style="left:56px;top:710px;width:28px;height:27px;background:#d3d3d3;border-radius:3px"></div>
<svg class="a" style="left:29px;top:716px" width="18" height="14" viewBox="0 0 18 14"><path d="M2 7 L6.5 11.5 L16 2" fill="none" stroke="#5e5e5e" stroke-width="2.6"/></svg>
<svg class="a" style="left:61px;top:715px" width="18" height="18" viewBox="0 0 18 18"><circle cx="9" cy="9" r="6.5" fill="none" stroke="#6e6e6e" stroke-width="2"/><path d="M4.5 13.5 L13.5 4.5" stroke="#6e6e6e" stroke-width="2"/></svg>
<div class="a" style="left:90px;top:713px;width:1px;height:22px;background:#cfcfcf;"></div>
<div class="a" style="left:164px;top:713px;width:1px;height:22px;background:#cfcfcf;"></div>
<div class="a" style="left:239px;top:713px;width:1px;height:22px;background:#cfcfcf;"></div>
<svg class="a" style="left:0;top:706px" width="420" height="36" viewBox="0 706 420 36">
<g fill="#6e6e6e" stroke="none">
<rect x="106" y="716" width="2.2" height="11"/><path d="M102.6 726.4 H111.6 L107.1 731.6 Z"/>
<rect x="139" y="716" width="2.2" height="11"/><path d="M135.6 726.4 H144.6 L140.1 731.6 Z"/>
<rect x="143.7" y="716" width="9.1" height="2.3"/><rect x="147" y="721.3" width="5.8" height="2.3"/><rect x="149" y="726.6" width="3.8" height="2.3"/>
<rect x="177.2" y="715" width="15.5" height="2.6"/><rect x="177.2" y="730.2" width="15.5" height="2.6"/>
<path d="M181.4 722.2 L185.1 719 L188.9 722.2 Z M181.4 725 L185.1 728.3 L188.9 725 Z"/>
<rect x="210" y="722.5" width="15.6" height="2.5"/>
<path d="M214 716 H222 L218 720.5 Z M214 731.6 H222 L218 727 Z"/>
</g>
<text x="112.5" y="722.6" font-size="9.5" font-weight="bold" font-family="Liberation Sans" fill="#6e6e6e">a</text>
<text x="112.6" y="731.7" font-size="9.5" font-weight="bold" font-family="Liberation Sans" fill="#6e6e6e">z</text>
<g fill="none" stroke="#bdbdbd" stroke-width="2.2">
<path d="M259 731.5 V718 M253.4 723.4 L259 717.6 L264.6 723.4"/>
<path d="M291 716.5 V730 M285.4 724.6 L291 730.4 L296.6 724.6"/>
</g>
<circle cx="324.5" cy="723.6" r="7.6" fill="none" stroke="#5e5e5e" stroke-width="2"/>
<path d="M324 719.5 V724 L327.3 726.8" fill="none" stroke="#5e5e5e" stroke-width="1.8"/>
<path d="M329.5 731.2 H335.2 L332.4 734.2 Z" fill="#3c3c3c"/>
</svg>
<div class="t " style="left:369px;top:710px;color:#777;font-size:14px">››</div>
<svg class="a" style="left:391px;top:716px" width="17" height="14" viewBox="0 0 17 14"><path d="M1.5 7 L6 11.5 L15.5 2" fill="none" stroke="#59a869" stroke-width="3"/></svg>
<div class="t " style="left:413px;top:712px;">Tests passed: <span style="font-weight:normal">1</span> <span style="color:#787878">of 1 test – 487 ms</span></div>
<div class="a" style="left:19px;top:741px;width:1391px;height:2px;background:#d4d4d4;"></div>
<div class="a" style="left:19px;top:742px;width:367px;height:132px;background:#fff;"></div>
<div class="a" style="left:19px;top:742px;width:366px;height:25px;background:#d5d5d5;"></div>
<div class="a" style="left:385px;top:742px;width:1px;height:132px;background:#d0d0d0;"></div>
<div class="a" style="left:386px;top:742px;width:1024px;height:132px;background:#fff;"></div>
<svg class="a" style="left:26px;top:749px" width="11" height="10" viewBox="0 0 11 10"><path d="M0 0 L11 0 L5.5 9.5 Z" fill="#a8a8a8"/></svg>
<svg class="a" style="left:50px;top:747px" width="17" height="14" viewBox="0 0 17 14"><path d="M1.5 7 L6 11.5 L15.5 2" fill="none" stroke="#6dbd6a" stroke-width="3"/></svg>
<div class="t " style="left:71px;top:743px;">MyTest</div>
<div class="t " style="left:280px;top:743px;width:100px;text-align:right;font-size:14px">487 ms</div>
<svg class="a" style="left:72px;top:772px" width="17" height="14" viewBox="0 0 17 14"><path d="M1.5 7 L6 11.5 L15.5 2" fill="none" stroke="#6dbd6a" stroke-width="3"/></svg>
<div class="t " style="left:94px;top:768px;">test</div>
<div class="t " style="left:280px;top:768px;width:100px;text-align:right;font-size:14px;color:#8c8c8c">487 ms</div>
<div class="a" style="left:403px;top:743px;width:290px;height:26px;background:#e8f2e5;"></div>
<div class="a mono" style="left:403px;top:745.0px;line-height:26.25px;color:#3e4c3e">F:\Java\JDK8\bin\java.exe ...</div>
<div class="a mono" style="left:403px;top:771.25px;line-height:26.25px;color:#000">User<svg style="display:inline-block;vertical-align:top;position:relative;top:3px;" width="80.0" height="16" viewBox="0 0 80 16" preserveAspectRatio="none"><g fill="none" stroke="#1a1a1a" stroke-width="1.1" stroke-linecap="square"><path transform="translate(0,0)" d="M3 1L2 3M1 3H6V15H1ZM1 9H6M10 1L8 5M9 4H15V14L13 16M10 8L12 10"/><path transform="translate(16,0)" d="M2 3H14M1 8H15M8 3V8L3 15M9 8V14H15V12"/><path transform="translate(32,0)" d="M7 1L5 4H12L10 2M2 6H14M8 4L3 11M8 6L14 11M6 10L9 11M5 12L10 13M3 15L12 13"/><path transform="translate(48,0)" d="M1 5H6M3.5 1V16M3.5 6L1 12M3.5 7L6 10M10 1L8 5M9 4H15V14L13 16M11 7L9 11H13"/><path transform="translate(64,0)" d="M1 2L3 4M1 7H3V13L1 15M2 14L15 15M7 1L6 4M6 3H14M10 1V7M5 7H15M7 9H13V13H7Z"/></g></svg>!</div>
<div class="a mono" style="left:403px;top:797.5px;line-height:26.25px;color:#000">name=subeily3——</div>
<div class="a mono" style="left:403px;top:850.0px;line-height:26.25px;color:#1f1f9a">Process finished with exit code 0</div>
<div class="a" style="left:372px;top:764px;width:282px;height:56px;border:2px solid #e8000e"></div>
</body></html>
